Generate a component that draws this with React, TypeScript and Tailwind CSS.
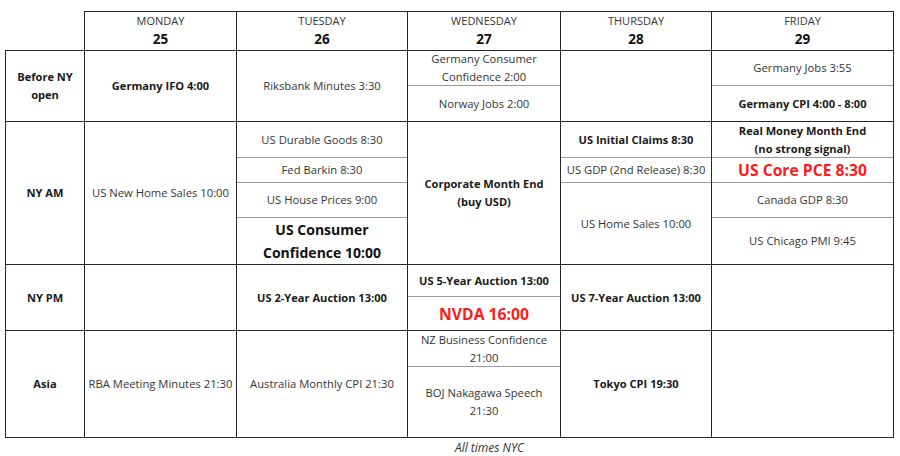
import React from 'react';

type Item = {
  text: React.ReactNode;
  h?: number; // height in px incl. bottom divider; last one fills the rest
  kind?: 'normal' | 'bold' | 'big' | 'red';
};

const days = [
  { name: 'MONDAY', num: 25 },
  { name: 'TUESDAY', num: 26 },
  { name: 'WEDNESDAY', num: 27 },
  { name: 'THURSDAY', num: 28 },
  { name: 'FRIDAY', num: 29 },
];

const textClass = (kind: Item['kind']) => {
  switch (kind) {
    case 'bold':
      return 'font-bold text-[11.1px] leading-[18px] text-[#1a1a1a]';
    case 'big':
      return 'font-bold text-[14px] leading-[23px] text-[#111]';
    case 'red':
      return 'font-bold text-[15.7px] leading-[22px] text-[#ff1a1a]';
    default:
      return 'text-[11.25px] leading-[18px] text-[#353535]';
  }
};

// one table cell, optionally split into several stacked events
const Cell = ({ items = [] }: { items?: Item[] }) => (
  <div className="flex flex-col border-r border-b border-[#262626]">
    {items.map((it, i) => {
      const last = i === items.length - 1;
      return (
        <div
          key={i}
          style={last ? undefined : { height: it.h }}
          className={`flex items-center justify-center text-center whitespace-nowrap ${
            last ? 'flex-1' : 'shrink-0 border-b border-[#9a9a9a]'
          } ${textClass(it.kind)}`}
        >
          <span>{it.text}</span>
        </div>
      );
    })}
  </div>
);

const Label = ({ children }: { children: React.ReactNode }) => (
  <div className="flex items-center justify-center text-center border-l border-r border-b border-[#262626] font-bold text-[11.1px] leading-[18px] text-[#1a1a1a]">
    <span>{children}</span>
  </div>
);

export default function App() {
  return (
    <div
      className="w-[900px] h-[456px] bg-white overflow-hidden"
      style={{ fontFamily: '"Open Sans", "Noto Sans", sans-serif' }}
    >
      <div className="ml-[5px] pt-[11px] w-[889px]">
        <div className="grid grid-cols-[80px_152px_171px_153px_151px_182px] grid-rows-[40px_71px_143px_66px_107px]">
          {/* header */}
          <div className="border-r border-b border-[#262626]" />
          {days.map((d) => (
            <div
              key={d.name}
              className="flex flex-col items-center justify-center border-t border-r border-b border-[#262626] pb-[3px]"
            >
              <span className="text-[11px] leading-[19px] text-[#353535]">{d.name}</span>
              <span className="text-[13.5px] leading-[19px] font-bold text-[#111]">{d.num}</span>
            </div>
          ))}

          {/* Before NY open */}
          <Label>
            Before NY
            <br />
            open
          </Label>
          <Cell items={[{ text: 'Germany IFO 4:00', kind: 'bold' }]} />
          <Cell items={[{ text: 'Riksbank Minutes 3:30' }]} />
          <Cell
            items={[
              { text: <>Germany Consumer<br />Confidence 2:00</>, h: 35 },
              { text: 'Norway Jobs 2:00' },
            ]}
          />
          <Cell />
          <Cell
            items={[
              { text: 'Germany Jobs 3:55', h: 35 },
              { text: 'Germany CPI 4:00 - 8:00', kind: 'bold' },
            ]}
          />

          {/* NY AM */}
          <Label>NY AM</Label>
          <Cell items={[{ text: 'US New Home Sales 10:00' }]} />
          <Cell
            items={[
              { text: 'US Durable Goods 8:30', h: 36 },
              { text: 'Fed Barkin 8:30', h: 25 },
              { text: 'US House Prices 9:00', h: 35 },
              { text: <>US Consumer<br />Confidence 10:00</>, kind: 'big' },
            ]}
          />
          <Cell items={[{ text: <>Corporate Month End<br />(buy USD)</>, kind: 'bold' }]} />
          <Cell
            items={[
              { text: 'US Initial Claims 8:30', kind: 'bold', h: 36 },
              { text: 'US GDP (2nd Release) 8:30', h: 25 },
              { text: 'US Home Sales 10:00' },
            ]}
          />
          <Cell
            items={[
              { text: <>Real Money Month End<br />(no strong signal)</>, kind: 'bold', h: 36 },
              { text: 'US Core PCE 8:30', kind: 'red', h: 25 },
              { text: 'Canada GDP 8:30', h: 35 },
              { text: 'US Chicago PMI 9:45' },
            ]}
          />

          {/* NY PM */}
          <Label>NY PM</Label>
          <Cell />
          <Cell items={[{ text: 'US 2-Year Auction 13:00', kind: 'bold' }]} />
          <Cell
            items={[
              { text: 'US 5-Year Auction 13:00', kind: 'bold', h: 32 },
              { text: 'NVDA 16:00', kind: 'red' },
            ]}
          />
          <Cell items={[{ text: 'US 7-Year Auction 13:00', kind: 'bold' }]} />
          <Cell />

          {/* Asia */}
          <Label>Asia</Label>
          <Cell items={[{ text: 'RBA Meeting Minutes 21:30' }]} />
          <Cell items={[{ text: 'Australia Monthly CPI 21:30' }]} />
          <Cell
            items={[
              { text: <>NZ Business Confidence<br />21:00</>, h: 36 },
              { text: <>BOJ Nakagawa Speech<br />21:30</> },
            ]}
          />
          <Cell items={[{ text: 'Tokyo CPI 19:30', kind: 'bold' }]} />
          <Cell />
        </div>
        <div className="ml-[80px] text-center italic text-[12px] leading-[18px] text-[#333] pt-[1px]">
          All times NYC
        </div>
      </div>
    </div>
  );
}
